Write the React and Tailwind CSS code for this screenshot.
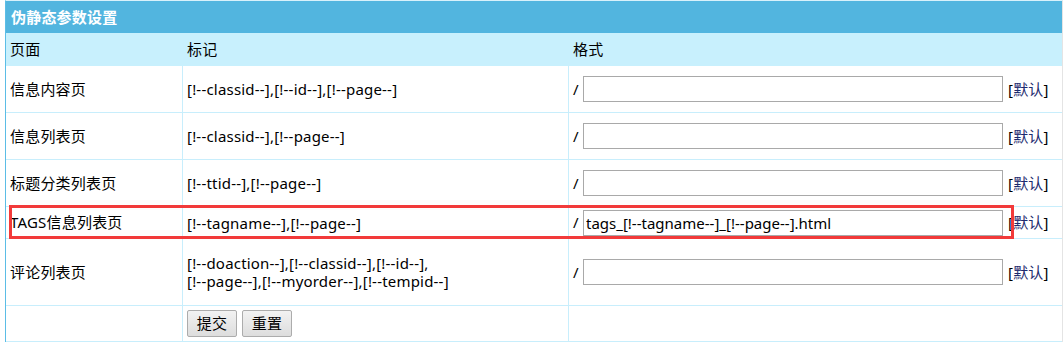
const rows = [
  { page: '信息内容页', marks: ['[!--classid--],[!--id--],[!--page--]'], value: '', h: 'h-[47px]' },
  { page: '信息列表页', marks: ['[!--classid--],[!--page--]'], value: '', h: 'h-[47px]' },
  { page: '标题分类列表页', marks: ['[!--ttid--],[!--page--]'], value: '', h: 'h-[47px]' },
  { page: 'TAGS信息列表页', marks: ['[!--tagname--],[!--page--]'], value: 'tags_[!--tagname--]_[!--page--].html', h: 'h-[32px]' },
  {
    page: '评论列表页',
    marks: ['[!--doaction--],[!--classid--],[!--id--],', '[!--page--],[!--myorder--],[!--tempid--]'],
    value: '',
    h: 'h-[67px]',
  },
];

function Row({ row }) {
  return (
    <div className={`grid grid-cols-[177px_386px_1fr] border-b border-[#c8eefc] ${row.h}`}>
      <div className="flex items-center pl-[4px] border-r border-[#c8eefc]">{row.page}</div>
      <div className="flex flex-col justify-center pl-[4px] border-r border-[#c8eefc] leading-[18px]">
        {row.marks.map((m) => (
          <span key={m}>{m}</span>
        ))}
      </div>
      <div className="flex items-center pl-[4px]">
        <span className="w-[10px]">/</span>
        <input
          type="text"
          defaultValue={row.value}
          className="w-[420px] h-[26px] border border-[#a9a9a9] px-[2px] tracking-normal text-black outline-none"
        />
        <span className="ml-[5px]">
          [<span className="text-[#1c2a6e]">默认</span>]
        </span>
      </div>
    </div>
  );
}

export default function App() {
  return (
    <div
      className="w-[1063px] h-[342px] bg-white pl-[5px] text-[15px] tracking-[0.2px] text-black overflow-hidden"
      style={{ fontFamily: '"Noto Sans", "Noto Sans CJK SC", sans-serif' }}
    >
      <div className="relative border-l border-[#5bbde6] border-r border-r-[#e4e4e4] border-t border-t-[#d8f1fb]">
        <div className="h-[32px] bg-[#52b5df] text-white font-bold flex items-center pl-[5px]">伪静态参数设置</div>
        <div className="grid grid-cols-[177px_386px_1fr] h-[33px] bg-[#c8f0fd] items-center">
          <div className="pl-[4px]">页面</div>
          <div className="pl-[4px]">标记</div>
          <div className="pl-[4px]">格式</div>
        </div>
        {rows.map((row) => (
          <Row key={row.page} row={row} />
        ))}
        <div className="grid grid-cols-[177px_386px_1fr] h-[36px] border-b border-[#c8eefc]">
          <div className="border-r border-[#c8eefc]" />
          <div className="flex items-center gap-[5px] pl-[4px] border-r border-[#c8eefc]">
            <button className="w-[50px] h-[27px] rounded-[2px] border border-[#acacac] bg-gradient-to-b from-[#f2f2f2] to-[#dddddd]">
              提交
            </button>
            <button className="w-[50px] h-[27px] rounded-[2px] border border-[#acacac] bg-gradient-to-b from-[#f2f2f2] to-[#dddddd]">
              重置
            </button>
          </div>
          <div />
        </div>
        <div className="absolute left-[3px] top-[204px] w-[1005px] h-[34px] border-[3px] border-[#f23a3a] pointer-events-none" />
      </div>
    </div>
  );
}
